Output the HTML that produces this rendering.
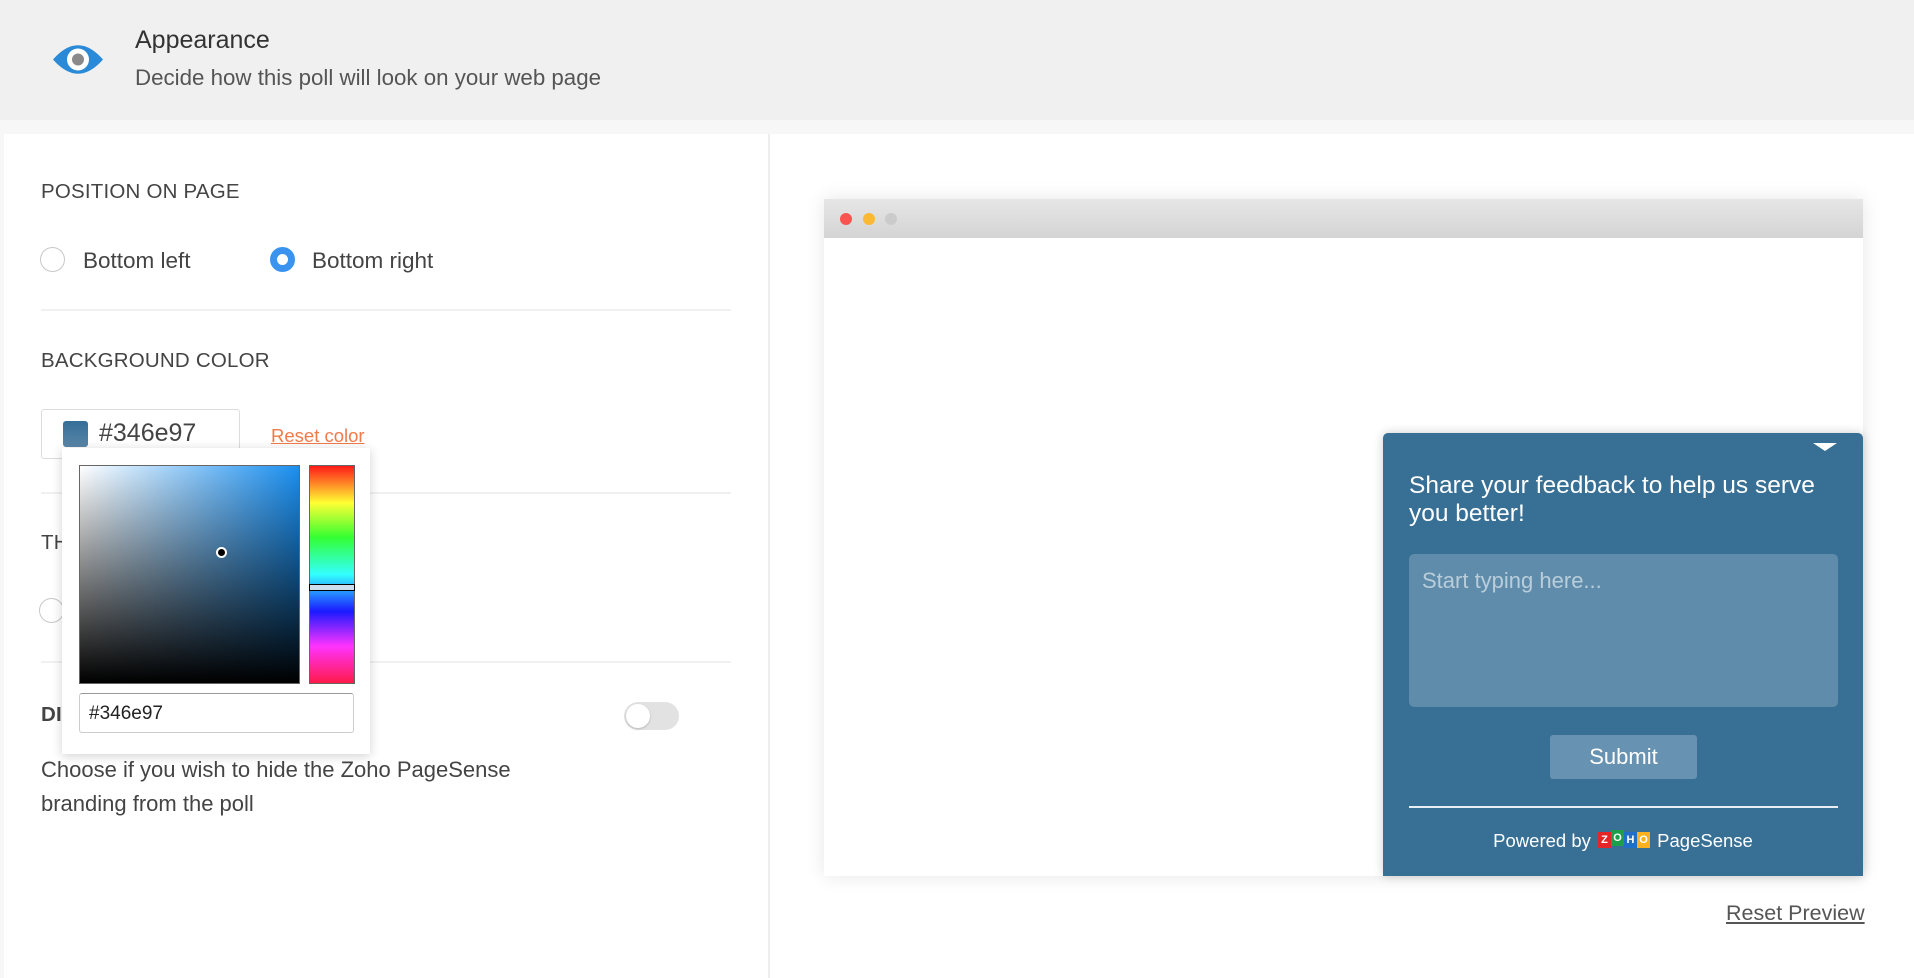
<!DOCTYPE html>
<html><head><meta charset="utf-8"><style>
*{box-sizing:border-box;margin:0;padding:0}
body{width:1914px;height:978px;position:relative;background:#fff;font-family:"Liberation Sans",Arial,sans-serif;overflow:hidden;color:#444}
.a{position:absolute}
.hdr{left:0;top:0;width:1914px;height:120px;background:#f0f0f0}
.strip{left:0;top:120px;width:1914px;height:14px;background:#f7f7f7}
.lbl{font-size:20.5px;color:#444;letter-spacing:0.2px}
.rad{width:25px;height:25px;border-radius:50%;border:1.5px solid #c8c8c8;background:#fff}
.hr{height:2px;background:#f0f0f0;left:41px;width:690px}
.t22{font-size:22.5px;color:#444}
.z{position:absolute;top:2px;width:13px;height:16px;color:#fff;font-size:11px;font-weight:bold;text-align:center;line-height:16px}
</style></head><body>
<div class="a hdr"></div>
<svg class="a" style="left:52px;top:44px" width="52" height="31" viewBox="0 0 52 31"><path d="M1 15.5 Q26 -13 51 15.5 Q26 44 1 15.5Z" fill="#2b8ad8"/><circle cx="26" cy="15.5" r="11" fill="#fff"/><circle cx="26" cy="15.5" r="6" fill="#8a8a8a"/></svg>
<div class="a" style="left:135px;top:26px;font-size:25px;color:#333">Appearance</div>
<div class="a" style="left:135px;top:65px;font-size:22.3px;color:#555">Decide how this poll will look on your web page</div>
<div class="a strip"></div>
<div class="a" style="left:768px;top:134px;width:2px;height:844px;background:#eee"></div>
<div class="a" style="left:0;top:134px;width:4px;height:844px;background:#f7f7f7"></div>

<div class="a lbl" style="left:41px;top:180px">POSITION ON PAGE</div>
<div class="a rad" style="left:40px;top:247px"></div>
<div class="a t22" style="left:83px;top:248px">Bottom left</div>
<div class="a rad" style="left:270px;top:247px;border:7px solid #3b93f0"></div>
<div class="a t22" style="left:312px;top:248px">Bottom right</div>
<div class="a hr" style="top:309px"></div>
<div class="a lbl" style="left:41px;top:349px">BACKGROUND COLOR</div>
<div class="a" style="left:41px;top:409px;width:199px;height:50px;border:1.5px solid #ddd;border-radius:3px"></div>
<div class="a" style="left:63px;top:421px;width:25px;height:26px;border-radius:3px;background:linear-gradient(#346e97,#5a86a8)"></div>
<div class="a" style="left:99px;top:419px;font-size:25px;color:#444">#346e97</div>
<div class="a" style="left:271px;top:425px;font-size:18.5px;color:#f07a4a;text-decoration:underline">Reset color</div>
<div class="a hr" style="top:492px"></div>
<div class="a lbl" style="left:41px;top:531px">TH</div>
<div class="a rad" style="left:39px;top:598px"></div>
<div class="a hr" style="top:661px"></div>
<div class="a lbl" style="left:41px;top:703px;font-weight:bold">DI</div>
<div class="a" style="left:624px;top:702px;width:55px;height:28px;border-radius:14px;background:#e2e2e2"></div>
<div class="a" style="left:626px;top:704px;width:24px;height:24px;border-radius:50%;background:#fff;box-shadow:0 1px 2px rgba(0,0,0,.2)"></div>
<div class="a" style="left:41px;top:753px;line-height:34px;font-size:22px;color:#444">Choose if you wish to hide the Zoho PageSense<br>branding from the poll</div>

<div class="a" style="left:62px;top:448px;width:308px;height:306px;background:#fff;box-shadow:0 2px 10px rgba(0,0,0,.18)"></div>
<div class="a" style="left:79px;top:465px;width:221px;height:219px;border:1.5px solid #666;background:linear-gradient(to bottom,rgba(0,0,0,0),#000),linear-gradient(to right,#fff,#1a8ff0)"></div>
<div class="a" style="left:216px;top:547px;width:11px;height:11px;border-radius:50%;background:#000;border:2px solid #fff"></div>
<div class="a" style="left:309px;top:465px;width:46px;height:219px;border:1.5px solid #666;background:linear-gradient(#ff1a1a 0%,#ffff33 17%,#33ff33 33%,#33ffff 50%,#1a1aff 67%,#ff33ff 83%,#ff1a4a 100%)"></div>
<div class="a" style="left:309px;top:584px;width:46px;height:7px;border:1.5px solid #000;background:#cde"></div>
<div class="a" style="left:79px;top:693px;width:275px;height:40px;border:1.5px solid #ccc;border-top-color:#999;border-radius:3px"></div>
<div class="a" style="left:89px;top:703px;font-size:19px;color:#222">#346e97</div>

<div class="a" style="left:824px;top:199px;width:1039px;height:677px;background:#fff;box-shadow:0 0 18px rgba(0,0,0,.1)"></div>
<div class="a" style="left:824px;top:199px;width:1039px;height:39px;background:linear-gradient(#e6e6e6,#d4d4d4)"></div>
<div class="a" style="left:840px;top:213px;width:12px;height:12px;border-radius:50%;background:#f95450"></div>
<div class="a" style="left:863px;top:213px;width:12px;height:12px;border-radius:50%;background:#fbb933"></div>
<div class="a" style="left:885px;top:213px;width:12px;height:12px;border-radius:50%;background:#cbcbcb"></div>

<div class="a" style="left:1383px;top:433px;width:480px;height:443px;background:#376f95;border-radius:5px 5px 0 0;box-shadow:0 0 10px rgba(0,0,0,.2)"></div>
<div class="a" style="left:1813px;top:443px;width:0;height:0;border-left:12px solid transparent;border-right:12px solid transparent;border-top:8px solid #fff"></div>
<div class="a" style="left:1409px;top:472px;font-size:24.5px;line-height:28px;color:#fff;width:445px">Share your feedback to help us serve you better!</div>
<div class="a" style="left:1409px;top:554px;width:429px;height:153px;background:#5e8caa;border-radius:5px"></div>
<div class="a" style="left:1422px;top:568px;font-size:22px;color:#b9cddb">Start typing here...</div>
<div class="a" style="left:1550px;top:735px;width:147px;height:44px;background:#6792b1;border-radius:3px;color:#fff;font-size:22px;text-align:center;line-height:44px">Submit</div>
<div class="a" style="left:1409px;top:806px;width:429px;height:2px;background:#e8eef3"></div>
<div class="a" style="left:1383px;top:830px;width:480px;text-align:center;color:#fff;font-size:18.5px">Powered by <span style="display:inline-block;vertical-align:-3px;width:56px;height:20px;position:relative"><span class="z" style="left:2px;background:#e42527">Z</span><span class="z" style="left:15px;top:0;background:#1e9d4a">O</span><span class="z" style="left:28px;background:#1f6fc9">H</span><span class="z" style="left:41px;background:#f9b21d">O</span></span> PageSense</div>

<div class="a" style="left:1726px;top:901px;font-size:21.5px;color:#555;text-decoration:underline">Reset Preview</div>
</body></html>
